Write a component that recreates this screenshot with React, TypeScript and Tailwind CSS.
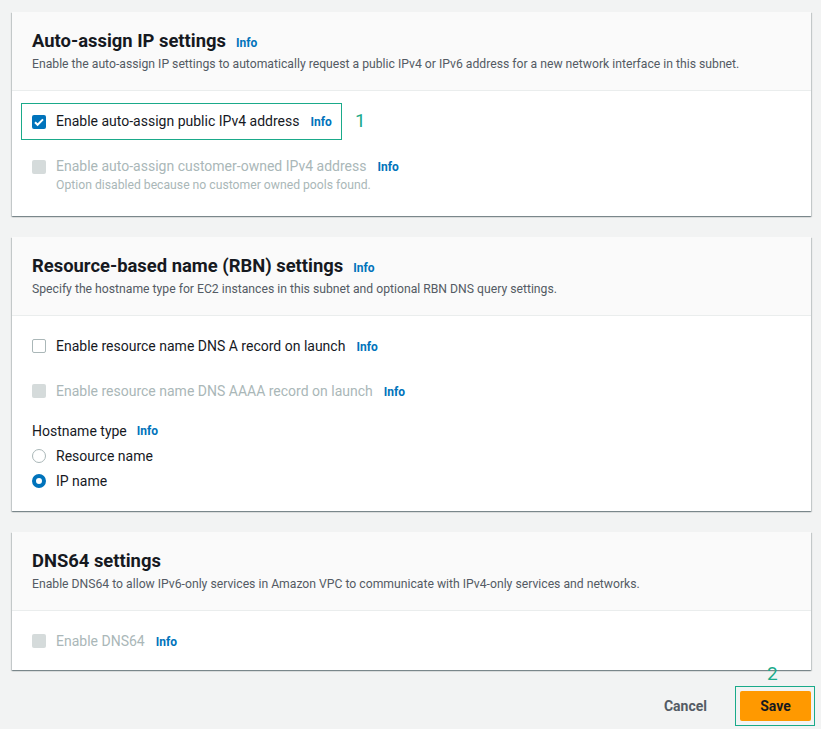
import type { ReactNode } from 'react'

function Info() {
  return <span className="text-[12px] font-bold text-[#0073bb]">Info</span>
}

function Box({ state }: { state: 'on' | 'off' | 'disabled' }) {
  if (state === 'on')
    return (
      <span className="flex h-[14px] w-[14px] shrink-0 items-center justify-center rounded-[2px] bg-[#0073bb]">
        <svg viewBox="0 0 14 14" className="h-[14px] w-[14px]">
          <path d="M3 7.2l2.6 2.6L11 4.4" fill="none" stroke="white" strokeWidth="2" />
        </svg>
      </span>
    )
  if (state === 'disabled')
    return <span className="h-[14px] w-[14px] shrink-0 rounded-[2px] bg-[#d5dbdb]" />
  return <span className="h-[14px] w-[14px] shrink-0 rounded-[2px] border border-[#aab7b8] bg-white" />
}

function Radio({ on }: { on?: boolean }) {
  return on ? (
    <span className="h-[14px] w-[14px] shrink-0 rounded-full border-[4px] border-[#0073bb] bg-white" />
  ) : (
    <span className="h-[14px] w-[14px] shrink-0 rounded-full border border-[#aab7b8] bg-white" />
  )
}

function Card({ title, info, desc, children }: { title: string; info?: boolean; desc: string; children: ReactNode }) {
  return (
    <div className="bg-white shadow-[0_1px_1px_0_rgba(0,28,36,0.3),1px_1px_1px_0_rgba(0,28,36,0.15),-1px_1px_1px_0_rgba(0,28,36,0.15)]">
      <div className="h-[79px] border-b border-[#eaeded] bg-[#fafafa] px-5 pt-[17px]">
        <div className="flex items-baseline gap-[10px]">
          <h2 className="text-[18.4px] font-bold leading-[24px] text-[#16191f]">{title}</h2>
          {info && <Info />}
        </div>
        <p className="mt-[3px] text-[12.2px] leading-[16px] text-[#545b64]">{desc}</p>
      </div>
      {children}
    </div>
  )
}

export default function App() {
  return (
    <div className="min-h-[729px] bg-[#f2f3f3] pl-3 pr-[10px] pt-3 font-['Roboto',sans-serif] text-[14px] text-[#16191f]">
      <Card
        title="Auto-assign IP settings"
        info
        desc="Enable the auto-assign IP settings to automatically request a public IPv4 or IPv6 address for a new network interface in this subnet."
      >
        <div className="h-[125px] px-5 pt-[12px]">
          <div className="flex items-center">
            <div className="-ml-[11px] flex h-[37px] w-[321px] items-center gap-[10px] border border-[#1aaa8a] pl-[10px]">
              <Box state="on" />
              <span>Enable auto-assign public IPv4 address</span>
              <span className="ml-[1px]"><Info /></span>
            </div>
            <span className="ml-[13px] text-[19px] text-[#1aaa8a]">1</span>
          </div>
          <div className="mt-[16px] flex items-center gap-[10px]">
            <Box state="disabled" />
            <span className="text-[#aab7b8]">Enable auto-assign customer-owned IPv4 address</span>
            <span className="ml-[1px]"><Info /></span>
          </div>
          <p className="ml-6 text-[12.2px] leading-[16px] text-[#aab7b8]">
            Option disabled because no customer owned pools found.
          </p>
        </div>
      </Card>

      <div className="h-[21px]" />

      <Card
        title="Resource-based name (RBN) settings"
        info
        desc="Specify the hostname type for EC2 instances in this subnet and optional RBN DNS query settings."
      >
        <div className="h-[195px] px-5 pt-[20px]">
          <div className="flex h-5 items-center gap-[10px]">
            <Box state="off" />
            <span>Enable resource name DNS A record on launch</span>
            <span className="ml-[1px]"><Info /></span>
          </div>
          <div className="mt-[25px] flex h-5 items-center gap-[10px]">
            <Box state="disabled" />
            <span className="text-[#aab7b8]">Enable resource name DNS AAAA record on launch</span>
            <span className="ml-[1px]"><Info /></span>
          </div>
          <div className="mt-5 flex h-5 items-center gap-[10px]">
            <span>Hostname type</span>
            <Info />
          </div>
          <div className="mt-[5px] flex h-5 items-center gap-[10px]">
            <Radio />
            <span>Resource name</span>
          </div>
          <div className="mt-[5px] flex h-5 items-center gap-[10px]">
            <Radio on />
            <span>IP name</span>
          </div>
        </div>
      </Card>

      <div className="h-[21px]" />

      <Card
        title="DNS64 settings"
        desc="Enable DNS64 to allow IPv6-only services in Amazon VPC to communicate with IPv4-only services and networks."
      >
        <div className="h-[59px] px-5 pt-[20px]">
          <div className="flex h-5 items-center gap-[10px]">
            <Box state="disabled" />
            <span className="text-[#aab7b8]">Enable DNS64</span>
            <span className="ml-[1px]"><Info /></span>
          </div>
        </div>
      </Card>

      <div className="mt-[16px] flex items-center justify-end">
        <button className="mr-[28px] text-[14px] font-bold text-[#545b64]">Cancel</button>
        <div className="relative -mr-1 border border-[#1aaa8a] py-1 pl-1 pr-[3px]">
          <span className="absolute -top-[27px] left-[31px] text-[19px] text-[#1aaa8a]">2</span>
          <div className="flex h-[30px] w-[71px] items-center justify-center rounded-[2px] bg-[#ff9900] text-[14px] font-bold text-[#16191f]">
            Save
          </div>
        </div>
      </div>
    </div>
  )
}
